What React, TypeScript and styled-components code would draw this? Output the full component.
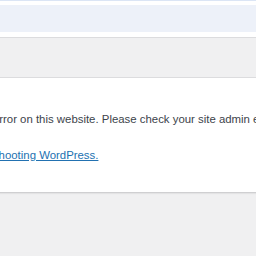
import React from "react";
import styled, { createGlobalStyle } from "styled-components";

const Global = createGlobalStyle`
  html, body {
    margin: 0;
    padding: 0;
    background: #f0f0f1;
    overflow: hidden;
  }
  body {
    width: 256px;
    height: 256px;
  }
`;

const Page = styled.div`
  width: 256px;
  height: 256px;
  overflow: hidden;
  display: flex;
  flex-direction: column;
  background: #f0f0f1;
`;

const TopStrip = styled.div`
  flex: none;
  height: 1px;
  background: #dbe5f5;
`;

const Spacer = styled.div<{ h: number }>`
  flex: none;
  height: ${({ h }) => h}px;
  background: #ffffff;
`;

const NoticeBar = styled.div`
  flex: none;
  height: 27px;
  background: #edf1f9;
`;

const Band = styled.div`
  flex: none;
  height: 39px;
  background: #f0f0f1;
  border-top: 1px solid #dcdcde;
  border-bottom: 1px solid #dcdcde;
`;

const Card = styled.div`
  flex: none;
  box-sizing: border-box;
  height: 115px;
  background: #ffffff;
  border-bottom: 1px solid #cfcfd1;
  box-shadow: 0 1px 1px rgba(0, 0, 0, 0.05);
  padding-top: 33px;
  overflow: hidden;
`;

const Content = styled.div`
  margin-left: -135px;
  display: flex;
  flex-direction: column;
  gap: 19px;
  font-family: "Liberation Sans", Arial, sans-serif;
  font-size: 11.4px;
  line-height: 17px;
  color: #3c434a;
  white-space: nowrap;
`;

const Para = styled.p`
  margin: 0;
`;

const Link = styled.a`
  color: #2271b1;
  text-decoration: underline;
  text-underline-offset: 1px;
`;

export default function App() {
  return (
    <Page>
      <Global />
      <TopStrip />
      <Spacer h={4} />
      <NoticeBar />
      <Spacer h={5} />
      <Band />
      <Card>
        <Content>
          <Para>
            There has been a critical error on this website. Please check your
            site admin email inbox for instructions.
          </Para>
          <Para>
            <Link href="#">Learn more about troubleshooting WordPress.</Link>
          </Para>
        </Content>
      </Card>
    </Page>
  );
}
